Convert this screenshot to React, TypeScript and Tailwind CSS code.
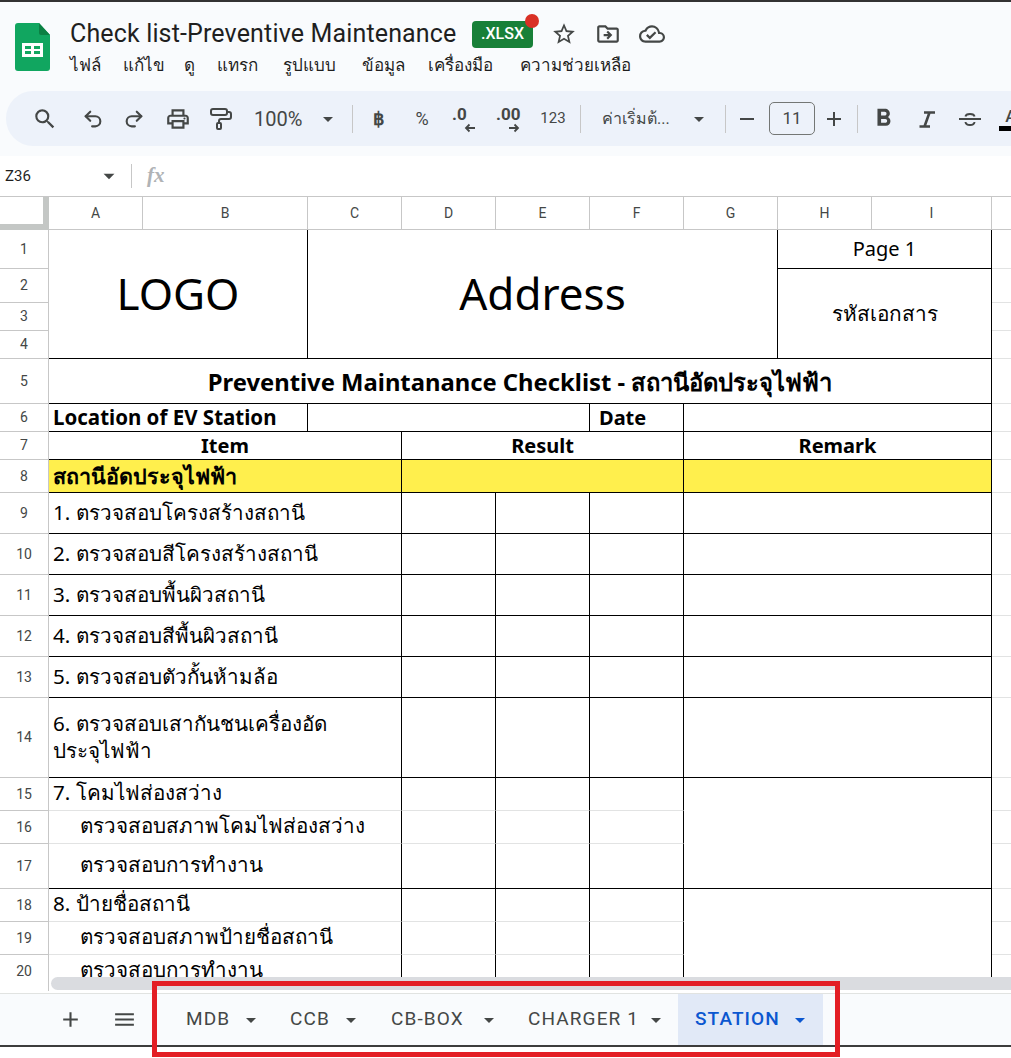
import type { ReactNode } from "react";
import { PaintRoller, Redo2, Undo2 } from "lucide-react";
import {
  MdAdd,
  MdArrowDropDown,
  MdFormatBold,
  MdMenu,
  MdOutlineCloudDone,
  MdOutlineDriveFileMove,
  MdOutlinePrint,
  MdRemove,
  MdSearch,
  MdStarBorder,
} from "react-icons/md";

const sheetFont = "font-['Noto_Sans','Liberation_Sans',sans-serif] text-black";

const menus = [
  { label: "ไฟล์", cls: "w-[53px]" },
  { label: "แก้ไข", cls: "w-[61px]" },
  { label: "ดู", cls: "w-[33px]" },
  { label: "แทรก", cls: "w-[66px]" },
  { label: "รูปแบบ", cls: "w-[79px]" },
  { label: "ข้อมูล", cls: "w-[66px]" },
  { label: "เครื่องมือ", cls: "w-[92px]" },
  { label: "ความช่วยเหลือ", cls: "" },
];

const columns = [
  { label: "A", cls: "w-[94px]" },
  { label: "B", cls: "w-[165px]" },
  { label: "C", cls: "w-[94px]" },
  { label: "D", cls: "w-[94px]" },
  { label: "E", cls: "w-[94px]" },
  { label: "F", cls: "w-[94px]" },
  { label: "G", cls: "w-[94px]" },
  { label: "H", cls: "w-[94px]" },
  { label: "I", cls: "w-[120px]" },
  { label: "", cls: "w-[30px]" },
];

const rowHeaders = [
  { n: 1, cls: "h-[39px]" },
  { n: 2, cls: "h-[34px]" },
  { n: 3, cls: "h-[28px]" },
  { n: 4, cls: "h-[28px]" },
  { n: 5, cls: "h-[45px]" },
  { n: 6, cls: "h-[28px]" },
  { n: 7, cls: "h-[28px]" },
  { n: 8, cls: "h-[33px]" },
  { n: 9, cls: "h-[41px]" },
  { n: 10, cls: "h-[41px]" },
  { n: 11, cls: "h-[41px]" },
  { n: 12, cls: "h-[41px]" },
  { n: 13, cls: "h-[41px]" },
  { n: 14, cls: "h-[80px]" },
  { n: 15, cls: "h-[33px]" },
  { n: 16, cls: "h-[33px]" },
  { n: 17, cls: "h-[45px]" },
  { n: 18, cls: "h-[33px]" },
  { n: 19, cls: "h-[33px]" },
  { n: 20, cls: "h-[33px]" },
];

const checkRows = [
  { row: "row-start-9", label: "1. ตรวจสอบโครงสร้างสถานี" },
  { row: "row-start-10", label: "2. ตรวจสอบสีโครงสร้างสถานี" },
  { row: "row-start-11", label: "3. ตรวจสอบพื้นผิวสถานี" },
  { row: "row-start-12", label: "4. ตรวจสอบสีพื้นผิวสถานี" },
  { row: "row-start-13", label: "5. ตรวจสอบตัวกั้นห้ามล้อ" },
  { row: "row-start-14", label: "6. ตรวจสอบเสากันชนเครื่องอัด\nประจุไฟฟ้า" },
];

// rows inside a merged group: light rule below, black rule closes the group
const groupRows = [
  { row: "row-start-15", label: "7. โคมไฟส่องสว่าง", line: "border-b-[#e2e3e3]", indent: "" },
  { row: "row-start-16", label: "ตรวจสอบสภาพโคมไฟส่องสว่าง", line: "border-b-[#e2e3e3]", indent: "pl-[31px]" },
  { row: "row-start-17", label: "ตรวจสอบการทำงาน", line: "border-b-black", indent: "pl-[31px]" },
  { row: "row-start-18", label: "8. ป้ายชื่อสถานี", line: "border-b-[#e2e3e3]", indent: "" },
  { row: "row-start-19", label: "ตรวจสอบสภาพป้ายชื่อสถานี", line: "border-b-[#e2e3e3]", indent: "pl-[31px]" },
  { row: "row-start-20", label: "ตรวจสอบการทำงาน", line: "border-b-[#e2e3e3]", indent: "pl-[31px]" },
];

const spareRows = [
  "row-start-1", "row-start-2", "row-start-3", "row-start-4", "row-start-5",
  "row-start-6", "row-start-7", "row-start-8", "row-start-9", "row-start-10",
  "row-start-11", "row-start-12", "row-start-13", "row-start-14", "row-start-15",
  "row-start-16", "row-start-17", "row-start-18", "row-start-19", "row-start-20",
];

const tabs = [
  { label: "MDB", cls: "w-[104px]", arrow: "mr-[19px]" },
  { label: "CCB", cls: "w-[101px]", arrow: "mr-[20px]" },
  { label: "CB-BOX", cls: "w-[137px]", arrow: "mr-[19px]" },
  { label: "CHARGER 1", cls: "w-[158px]", arrow: "mr-[10px]" },
];

function Cell({ className = "", children }: { className?: string; children?: ReactNode }) {
  return (
    <div className={`flex min-w-0 items-center border-r border-b border-black px-[4px] ${className}`}>
      {children}
    </div>
  );
}

function SheetsLogo() {
  return (
    <svg width="35" height="48" viewBox="0 0 35 48" className="shrink-0">
      <path d="M3 0H24L35 12V45a3 3 0 0 1-3 3H3a3 3 0 0 1-3-3V3a3 3 0 0 1 3-3Z" fill="#11a660" />
      <path d="M24 0L35 12H26a2 2 0 0 1-2-2Z" fill="#0b8043" />
      <path d="M7 20H28V34H7ZM10 23V26H16V23ZM19 23V26H25V23ZM10 28V31H16V28ZM19 28V31H25V28Z" fill="#fff" fillRule="evenodd" />
    </svg>
  );
}

function Sep({ className = "" }: { className?: string }) {
  return <div className={`h-[28px] w-px shrink-0 bg-[#c7c7c7] ${className}`} />;
}

function ToolIcon({ className = "", children }: { className?: string; children: ReactNode }) {
  return <div className={`flex shrink-0 items-center justify-center text-[#444746] ${className}`}>{children}</div>;
}

function DecimalButton({ label, dir, className = "" }: { label: string; dir: "left" | "right"; className?: string }) {
  return (
    <div className={`relative h-[32px] w-[32px] shrink-0 text-[#444746] ${className}`}>
      <span className="absolute top-[-1px] left-[4px] text-[17px] leading-[24px] font-bold">{label}</span>
      <svg width="12" height="10" viewBox="0 0 12 10" className="absolute top-[20px] left-[16px]" fill="none" stroke="#444746" strokeWidth="1.8">
        {dir === "left" ? <path d="M11 5H2M5.5 1.5L2 5l3.5 3.5" /> : <path d="M1 5h9M6.5 1.5L10 5 6.5 8.5" />}
      </svg>
    </div>
  );
}

export default function App() {
  return (
    <div className="relative flex h-[1058px] w-[1011px] flex-col overflow-hidden bg-white font-['Roboto','Liberation_Sans',sans-serif]">
      <div className="h-[2px] shrink-0 bg-[#333]" />

      {/* Title and menus */}
      <header className="flex h-[89px] shrink-0 bg-[#f9fbfd] pl-[15px]">
        <div className="mt-[21px]">
          <SheetsLogo />
        </div>
        <div className="ml-[20px] flex flex-col">
          <div className="mt-[17px] flex h-[30px] items-center">
            <span className="w-[402px] text-[25px] leading-[30px] tracking-[0.15px] whitespace-nowrap text-[#1f1f1f]">
              Check list-Preventive Maintenance
            </span>
            <span className="relative flex h-[27px] w-[61px] items-center justify-center rounded-[4px] bg-[#188038] text-[16px] font-medium text-white">
              .XLSX
              <span className="absolute -top-[7px] -right-[6px] h-[14px] w-[14px] rounded-full bg-[#d93025]" />
            </span>
            <MdStarBorder className="ml-[18px] text-[26px] text-[#444746]" />
            <MdOutlineDriveFileMove className="ml-[18px] text-[26px] text-[#444746]" />
            <MdOutlineCloudDone className="ml-[18px] text-[26px] text-[#444746]" />
          </div>
          <nav className="mt-[4px] flex text-[17px] leading-[24px] text-[#1f1f1f]">
            {menus.map((m) => (
              <span key={m.label} className={`whitespace-nowrap ${m.cls}`}>{m.label}</span>
            ))}
          </nav>
        </div>
      </header>

      {/* Toolbar */}
      <div className="h-[65px] shrink-0 bg-[#f9fbfd] pl-[6px]">
        <div className="flex h-[55px] items-center overflow-hidden rounded-l-[27px] bg-[#edf2fa] pl-[19px] text-[#444746]">
          <ToolIcon className="w-10"><MdSearch className="text-[26px]" /></ToolIcon>
          <ToolIcon className="ml-2 w-10"><Undo2 size={22} strokeWidth={2.3} /></ToolIcon>
          <ToolIcon className="ml-px w-10"><Redo2 size={22} strokeWidth={2.3} /></ToolIcon>
          <ToolIcon className="ml-1 w-10"><MdOutlinePrint className="text-[26px]" /></ToolIcon>
          <ToolIcon className="ml-[3px] w-10"><PaintRoller size={24} strokeWidth={2} /></ToolIcon>
          <span className="ml-[13px] w-[52px] shrink-0 text-[20px]">100%</span>
          <ToolIcon className="ml-[10px] w-6"><MdArrowDropDown className="text-[28px]" /></ToolIcon>
          <Sep className="ml-3" />
          <ToolIcon className="ml-[9px] w-8 text-[18px] font-bold">฿</ToolIcon>
          <ToolIcon className="ml-3 w-8 text-[18px]">%</ToolIcon>
          <DecimalButton label=".0" dir="left" className="ml-[10px]" />
          <DecimalButton label=".00" dir="right" className="ml-3" />
          <ToolIcon className="ml-[13px] w-8 text-[15px]">123</ToolIcon>
          <Sep className="ml-[11px]" />
          <span className="ml-[21px] w-[76px] shrink-0 text-[16px] whitespace-nowrap">ค่าเริ่มต้...</span>
          <ToolIcon className="ml-[9px] w-6"><MdArrowDropDown className="text-[28px]" /></ToolIcon>
          <Sep className="ml-[14px]" />
          <ToolIcon className="ml-[9px] w-6"><MdRemove className="text-[24px]" /></ToolIcon>
          <div className="ml-[10px] flex h-[33px] w-[46px] shrink-0 items-center justify-center rounded-[5px] border border-[#747775] text-[17px]">11</div>
          <ToolIcon className="ml-[7px] w-6"><MdAdd className="text-[26px]" /></ToolIcon>
          <Sep className="ml-[11px]" />
          <ToolIcon className="ml-[13px] w-6"><MdFormatBold className="shrink-0 text-[29px]" /></ToolIcon>
          <ToolIcon className="ml-5 w-6">
            <svg width="24" height="24" viewBox="0 0 24 24" fill="none" stroke="#444746" strokeWidth="2.6">
              <path d="M9 5.5H20M4.5 19.5H15M14.5 5.5L9.5 19.5" />
            </svg>
          </ToolIcon>
          <ToolIcon className="ml-[19px] w-6">
            <svg width="24" height="24" viewBox="0 0 24 24" fill="none" stroke="#444746" strokeWidth="2">
              <path d="M1 12H23M7.5 9.5C8 6 16 6 16.5 9.5M7.5 15C8 19 16 19 16.5 15" />
            </svg>
          </ToolIcon>
          <div className="ml-[17px] flex w-[24px] shrink-0 flex-col items-center">
            <span className="h-[20px] text-[17px] leading-[20px] font-medium">A</span>
            <div className="h-[5px] w-[24px] bg-black" />
          </div>
        </div>
      </div>

      {/* Formula bar */}
      <div className="flex h-[40px] shrink-0 items-center bg-white pl-[5px]">
        <span className="w-[91px] text-[15px] text-[#1f1f1f]">Z36</span>
        <MdArrowDropDown className="text-[26px] text-[#444746]" />
        <div className="ml-[9px] h-[24px] w-px bg-[#c7c7c7]" />
        <span className="ml-[15px] font-['Liberation_Serif',serif] text-[21px] font-bold text-[#b0b3b6] italic">fx</span>
      </div>

      {/* Column headers */}
      <div className="flex h-[34px] shrink-0 border-t border-[#c7c7c7]">
        <div className="h-[33px] w-[49px] shrink-0 border-r-[6px] border-b-[6px] border-[#c4c7c5] bg-white" />
        {columns.map((c, i) => (
          <div key={i} className={`flex h-[33px] shrink-0 items-center justify-center border-r border-b border-[#c7c7c7] text-[14px] text-[#444746] ${c.cls}`}>
            {c.label}
          </div>
        ))}
      </div>

      {/* Sheet */}
      <div className="flex h-[747px] shrink-0 overflow-hidden">
        <div className="w-[49px] shrink-0">
          {rowHeaders.map((r) => (
            <div key={r.n} className={`flex items-center justify-center border-r border-b border-[#c7c7c7] text-[14px] text-[#444746] ${r.cls}`}>
              {r.n}
            </div>
          ))}
        </div>

        <div className={`grid shrink-0 grid-cols-[94px_165px_94px_94px_94px_94px_94px_94px_120px_30px] grid-rows-[39px_34px_28px_28px_45px_28px_28px_33px_41px_41px_41px_41px_41px_80px_33px_33px_45px_33px_33px_33px] ${sheetFont}`}>
          <Cell className="col-start-1 col-span-2 row-start-1 row-span-4 justify-center pb-[2px] text-[44px]">LOGO</Cell>
          <Cell className="col-start-3 col-span-5 row-start-1 row-span-4 justify-center pb-[2px] text-[44px]">Address</Cell>
          <Cell className="col-start-8 col-span-2 row-start-1 justify-center text-[20px]">Page 1</Cell>
          <Cell className="col-start-8 col-span-2 row-start-2 row-span-3 justify-center text-[20.8px]">รหัสเอกสาร</Cell>

          <Cell className="col-start-1 col-span-9 row-start-5 justify-center pt-[3px] text-[23.8px] font-bold">
            Preventive Maintanance Checklist - สถานีอัดประจุไฟฟ้า
          </Cell>

          <Cell className="col-start-1 col-span-2 row-start-6 text-[20.5px] font-bold">Location of EV Station</Cell>
          <Cell className="col-start-3 col-span-3 row-start-6" />
          <Cell className="col-start-6 row-start-6 pl-[9px] text-[20px] font-bold">Date</Cell>
          <Cell className="col-start-7 col-span-3 row-start-6" />

          <Cell className="col-start-1 col-span-3 row-start-7 justify-center text-[20px] font-bold">Item</Cell>
          <Cell className="col-start-4 col-span-3 row-start-7 justify-center text-[20px] font-bold">Result</Cell>
          <Cell className="col-start-7 col-span-3 row-start-7 justify-center text-[20px] font-bold">Remark</Cell>

          <Cell className="col-start-1 col-span-3 row-start-8 bg-[#ffef4d] text-[21.5px] font-bold">สถานีอัดประจุไฟฟ้า</Cell>
          <Cell className="col-start-4 col-span-3 row-start-8 bg-[#ffef4d]" />
          <Cell className="col-start-7 col-span-3 row-start-8 bg-[#ffef4d]" />

          {checkRows.map((r) => (
            <div key={r.row} className="contents">
              <Cell className={`col-start-1 col-span-3 pb-[2px] text-[20.6px] leading-[27px] whitespace-pre-line ${r.row}`}>{r.label}</Cell>
              <Cell className={`col-start-4 ${r.row}`} />
              <Cell className={`col-start-5 ${r.row}`} />
              <Cell className={`col-start-6 ${r.row}`} />
              <Cell className={`col-start-7 col-span-3 ${r.row}`} />
            </div>
          ))}

          {groupRows.map((r) => (
            <div key={r.row} className="contents">
              <Cell className={`col-start-1 col-span-3 pb-[3px] text-[20.6px] whitespace-nowrap ${r.row} ${r.line} ${r.indent}`}>{r.label}</Cell>
              <Cell className={`col-start-4 ${r.row} ${r.line}`} />
              <Cell className={`col-start-5 ${r.row} ${r.line}`} />
              <Cell className={`col-start-6 ${r.row} ${r.line}`} />
            </div>
          ))}
          <Cell className="col-start-7 col-span-3 row-start-15 row-span-3" />
          <Cell className="col-start-7 col-span-3 row-start-18 row-span-3" />

          {spareRows.map((row) => (
            <div key={row} className={`col-start-10 border-b border-[#e2e3e3] ${row}`} />
          ))}
        </div>
      </div>

      {/* Horizontal scrollbar */}
      <div className="flex h-[16px] shrink-0 bg-white">
        <div className="h-[14px] w-[49px] shrink-0 border-r border-[#c7c7c7]" />
        <div className="ml-[2px] h-[13px] flex-1 rounded-l-[7px] bg-[#dadce0]" />
      </div>

      {/* Sheet tabs */}
      <footer className="flex h-[54px] shrink-0 border-t border-[#e1e3e1] border-b-2 border-b-[#3c3c3c] bg-[#f9fbfd] text-[#444746]">
        <MdAdd className="mt-[13px] ml-[58px] text-[25px]" />
        <MdMenu className="mt-[13px] ml-[29px] text-[25px]" />
        <div className="ml-[41px] flex">
          {tabs.map((t) => (
            <div key={t.label} className={`flex items-center pl-[8px] text-[19px] tracking-[1.1px] whitespace-nowrap ${t.cls}`}>
              <span className="flex-1">{t.label}</span>
              <MdArrowDropDown className={`text-[24px] ${t.arrow}`} />
            </div>
          ))}
          <div className="flex w-[145px] items-center bg-[#e1e9f7] pl-[17px] text-[19px] font-medium tracking-[1.1px] text-[#0b57d0]">
            <span className="flex-1">STATION</span>
            <MdArrowDropDown className="mr-[11px] text-[24px]" />
          </div>
        </div>
      </footer>
      <div className="flex-1 bg-white" />

      {/* Red annotation box drawn over the screenshot */}
      <div className="absolute top-[981px] left-[152px] h-[76px] w-[688px] border-[5px] border-[#e31e24]" />
    </div>
  );
}
